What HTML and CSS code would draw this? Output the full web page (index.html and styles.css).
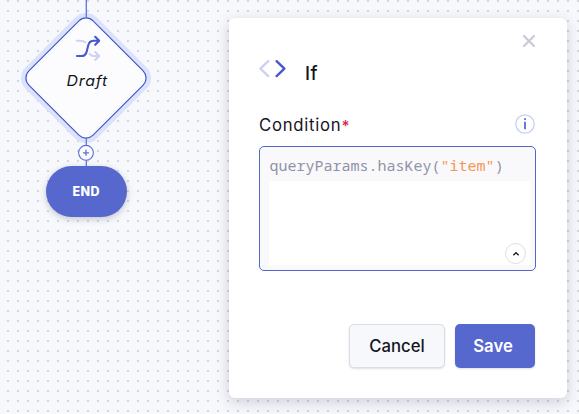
FILE: index.html
```html
<!DOCTYPE html>
<html lang="en">
<head>
<meta charset="utf-8">
<title>Flow editor</title>
<link rel="stylesheet" href="styles.css">
</head>
<body>
<main class="canvas">
  <svg class="flow" width="180" height="240" viewBox="0 0 180 240">
    <rect class="halo" x="40.6" y="32.6" width="90.8" height="90.8" rx="10" transform="rotate(45 86 78)"/>
    <rect class="decision" x="40.6" y="32.6" width="90.8" height="90.8" rx="10" transform="rotate(45 86 78)"/>
    <path class="line" d="M86.3 0V18M86.3 138V166"/>
    <g class="branch pale">
      <path d="M77 40.8h3.5q3 0 4.8 1.5M89.8 54.2q1.4 1.8 4 1.8h5.2M95.2 52l4 4-4 4"/>
    </g>
    <g class="branch">
      <path d="M77 56h4.5C90.5 56 84.5 40.8 93.5 40.8H99M95.2 36.8l4 4-4 4"/>
    </g>
    <text class="draft" x="66.4" y="85.6" textLength="41.5" lengthAdjust="spacingAndGlyphs">Draft</text>
    <circle class="add" cx="86" cy="152.8" r="7.4"/>
    <path class="plus" d="M83 152.8h6M86 149.8v6"/>
  </svg>
  <div class="end-node"><span>END</span></div>

  <section class="panel">
    <svg class="close" width="14" height="14" viewBox="0 0 14 14"><path d="M2 2l10 10M12 2L2 12"/></svg>
    <header class="heading">
      <svg class="code-icon" width="28" height="20" viewBox="0 0 28 20">
        <path class="left" d="M9.2 2.2L1.4 9.7l7.8 7.4"/>
        <path class="right" d="M17.6 2.2l7.8 7.5-7.8 7.4"/>
      </svg>
      <h1>If</h1>
    </header>
    <div class="field-head">
      <label for="condition"><span class="label-text">Condition</span><span class="required">*</span></label>
      <svg class="info" width="22" height="22" viewBox="0 0 22 22">
        <circle cx="11" cy="11" r="9.2"/>
        <path d="M11 8.7v7.6M11 5.3v1.8"/>
      </svg>
    </div>
    <div class="editor" id="condition">
      <div class="code">queryParams.hasKey(<span class="string">"item"</span>)</div>
      <div class="blank">
        <div class="collapse"><svg width="8" height="6" viewBox="0 0 8 6"><path d="M1.3 4.3L4 1.7l2.7 2.6"/></svg></div>
      </div>
    </div>
    <footer class="actions">
      <button class="cancel"><span>Cancel</span></button>
      <button class="save"><span>Save</span></button>
    </footer>
  </section>
</main>
</body>
</html>
```
FILE: styles.css
```css
* { box-sizing: border-box; }
body { margin: 0; font-family: Inter, "Liberation Sans", sans-serif; color: #15151f; }
.canvas {
  position: relative;
  width: 579px;
  height: 414px;
  overflow: hidden;
  background-color: #f7f8fc;
  background-image: conic-gradient(from 270deg at 2px 2px, #d5d6dc 90deg, transparent 0);
  background-size: 10px 10px;
  background-position: 7px 0;
}
.flow { position: absolute; left: 0; top: 0; }
.line { fill: none; stroke: #6574d5; stroke-width: 1.3; }
.halo { fill: none; stroke: #dbe2fb; stroke-width: 10; }
.decision { fill: #fcfcff; stroke: #4458cb; stroke-width: 1.2; }
.branch { fill: none; stroke: #4658cc; stroke-width: 2.1; stroke-linecap: round; stroke-linejoin: round; }
.pale { stroke: #cdd2f2; }
.draft { font-size: 14.5px; letter-spacing: .7px; font-style: italic; font-weight: 400; fill: #15151f; }
.add { fill: #fbfcff; stroke: #6070d2; stroke-width: 1.1; }
.plus { stroke: #6070d2; stroke-width: 1.3; }
.end-node {
  position: absolute;
  left: 45.5px;
  top: 166px;
  width: 81.5px;
  height: 51px;
  border-radius: 26px;
  display: flex;
  align-items: center;
  justify-content: center;
  background: #5668ce;
  box-shadow: 0 2px 6px rgba(40, 45, 80, .25);
  color: #fff;
  font-size: 12.5px;
  letter-spacing: .4px;
  font-weight: 800;
}
.panel {
  position: absolute;
  left: 229px;
  top: 18px;
  width: 338px;
  height: 379.5px;
  padding: 0 31.5px 0 30px;
  display: flex;
  flex-direction: column;
  background: #fff;
  border-radius: 6px;
  box-shadow: 0 4px 14px rgba(40, 45, 80, .2);
}
.close { align-self: flex-end; margin: 16px 0 0; fill: none; stroke: #c9cad9; stroke-width: 2.2; stroke-linecap: round; }
.heading { display: flex; height: 28px; margin-top: 10px; gap: 18px; }
.code-icon { fill: none; stroke-width: 2.4; stroke-linecap: round; stroke-linejoin: round; margin-top: 1px; }
.left { stroke: #cdd2f2; }
.right { stroke: #4658cc; }
h1 { margin: 4px 0 0; font-size: 18.5px; line-height: 22px; font-weight: 500; letter-spacing: .4px; }
.field-head { display: flex; justify-content: space-between; height: 26px; margin-top: 27px; }
label { font-size: 16.7px; line-height: 25px; white-space: nowrap; }
.label-text { letter-spacing: .75px; }
.required { color: #dc2b50; font-size: 15px; font-weight: 600; }
.info { fill: none; stroke: #c8cff2; stroke-width: 1.3; }
.info path { stroke: #4658cc; stroke-width: 1.6; }
.editor {
  width: 277px;
  height: 125px;
  margin-top: 7px;
  padding: 7px 5px 5px 9px;
  border: 1.3px solid #5366d0;
  border-radius: 5px;
  background: #f9f9fc;
}
.code { height: 27px; padding-left: .6px; font: 15px/22px "Noto Sans Mono", "DejaVu Sans Mono", monospace; color: #9092a6; white-space: nowrap; }
.string { color: #f69650; }
.blank { height: 84px; background: #fff; display: flex; align-items: flex-end; justify-content: flex-end; padding: 0 4px 1px 0; }
.collapse { width: 21px; height: 21px; border: 1px solid #dedee4; border-radius: 50%; display: flex; align-items: center; justify-content: center; }
.collapse svg { fill: none; stroke: #20202a; stroke-width: 1.4; }
.actions { display: flex; gap: 10px; justify-content: flex-end; margin: 53px .5px 0 0; }
button { height: 43.5px; padding: 0; border-radius: 5px; font: 500 16.7px Inter, "Liberation Sans", sans-serif; box-shadow: 0 1px 2px rgba(40, 45, 80, .15); }
.cancel { width: 96px; color: #15151f; background: #f7f8fc; border: 1px solid #dcdde4; }
.save { width: 80px; color: #fff; background: #5668ce; border: 0; font-weight: 600; padding-right: 4px; }
```
